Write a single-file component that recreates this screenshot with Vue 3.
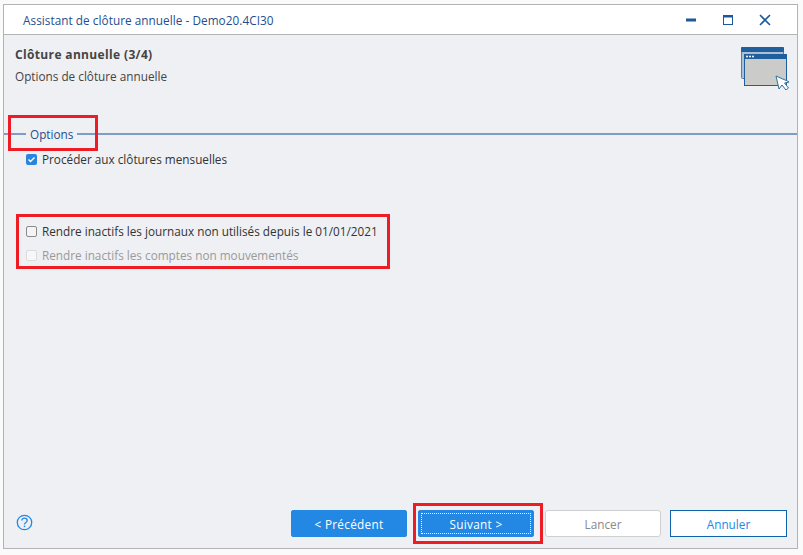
<script setup>
const title = 'Assistant de clôture annuelle - Demo20.4CI30'
</script>

<template>
  <div class="page">
    <div class="window">
      <header class="titlebar">
        <span class="title">{{ title }}</span>
        <div class="controls">
          <svg width="37" height="30" viewBox="0 0 37 30"><rect x="13" y="13.500" width="10" height="3" fill="#1c5a9c"/></svg>
          <svg width="37" height="30" viewBox="0 0 37 30"><rect x="13.500" y="10.500" width="9" height="9" fill="none" stroke="#1c5a9c"/><rect x="13" y="10" width="10" height="2.500" fill="#1c5a9c"/></svg>
          <svg width="37" height="30" viewBox="0 0 37 30"><path d="M13 10l10 10M23 10l-10 10" stroke="#1c5a9c" stroke-width="1.600" fill="none"/></svg>
        </div>
      </header>
      <main class="body">
        <section class="head">
          <div class="head-text">
            <h1>Clôture annuelle (3/4)</h1>
            <p>Options de clôture annuelle</p>
          </div>
          <svg class="wizard" width="49" height="44" viewBox="0 0 49 44">
            <rect x="1.500" y="1.500" width="42" height="31" rx="1" fill="#aebfd0" stroke="#4f80ad"/>
            <rect x="1" y="1" width="43" height="5" rx="1" fill="#1f5f9e"/>
            <rect x="4.500" y="8.500" width="42" height="31" fill="#cbcbc9" stroke="#1f5f9e"/>
            <rect x="4" y="8" width="43" height="5" rx="1" fill="#1f5f9e"/>
            <circle cx="7" cy="10.500" r="1" fill="#fff"/><circle cx="10" cy="10.500" r="1" fill="#fff"/><circle cx="13" cy="10.500" r="1" fill="#fff"/>
            <path d="M36 30l3 13 3-4 4 5 2.500-2-4-5 5-1z" fill="#fff" stroke="#2b739f" stroke-width="1"/>
          </svg>
        </section>
        <fieldset class="group">
          <legend>Options</legend>
          <label class="check first">
            <span class="box on"><svg width="11" height="11" viewBox="0 0 11 11"><path d="M2.500 5.500l2 2 4-4" fill="none" stroke="#fff" stroke-width="1.400"/></svg></span>
            Procéder aux clôtures mensuelles
          </label>
          <div class="annotated">
            <label class="check"><span class="box"></span>Rendre inactifs les journaux non utilisés depuis le 01/01/2021</label>
            <label class="check disabled"><span class="box"></span>Rendre inactifs les comptes non mouvementés</label>
          </div>
        </fieldset>
        <footer class="footer">
          <svg class="help" width="17" height="17" viewBox="0 0 17 17">
            <circle cx="8.500" cy="8.500" r="7.200" fill="none" stroke="#2388e4" stroke-width="1.300"/>
            <path d="M5.800 6.600c0-3.400 5.400-3.400 5.400 0 0 2-2.700 1.800-2.700 3.900" fill="none" stroke="#2388e4" stroke-width="1.300"/>
            <rect x="7.800" y="11.600" width="1.400" height="1.500" fill="#2388e4"/>
          </svg>
          <div class="buttons">
            <button class="btn primary">&lt; Précédent</button>
            <button class="btn primary focus"><span>Suivant &gt;</span></button>
            <button class="btn muted">Lancer</button>
            <button class="btn outline">Annuler</button>
          </div>
        </footer>
      </main>
    </div>
    <i class="mark mark-options"></i>
    <i class="mark mark-checks"></i>
    <i class="mark mark-next"></i>
  </div>
</template>

<style>
html, body { margin: 0; background: #fafafa; }
</style>

<style scoped>
.page {
  position: relative;
  width: 803px;
  height: 555px;
  padding: 4px 5px 6px 3px;
  box-sizing: border-box;
  font-family: "Open Sans", "Noto Sans", sans-serif;
  font-size: 11.750px;
  color: #333;
  overflow: hidden;
}
.window {
  height: 100%;
  box-sizing: border-box;
  border: 1px solid #b3b3b6;
  display: flex;
  flex-direction: column;
  background: #eff0f4;
}
.titlebar {
  height: 30px;
  flex: none;
  display: flex;
  align-items: center;
  justify-content: space-between;
  background: #fff;
  border-bottom: 1px solid #b3b3b6;
  box-sizing: border-box;
  padding-left: 19px;
}
.title { color: #1f4e8c; letter-spacing: 0.050px; }
.controls { display: flex; align-items: center; padding-right: 13px; }
.controls svg { display: block; }
.body { flex: 1; display: flex; flex-direction: column; min-height: 0; }
.head {
  display: flex;
  justify-content: space-between;
  padding: 11px 8px 0 11px;
  height: 90px;
  box-sizing: border-box;
  flex: none;
}
h1 { margin: 0 0 5px; font-size: 12px; letter-spacing: 0.350px; line-height: 17px; font-weight: 700; color: #444; }
.head p { margin: 0; line-height: 17px; color: #444; }
.wizard { display: block; }
.group {
  flex: 1;
  margin: 0;
  padding: 0 0 0 22px;
  border: 0;
  border-top: 2px solid #7f9cc5;
  min-width: 0;
  position: relative;
}
legend {
  margin-left: -8px;
  padding: 0 4px 0 12px;
  color: #1f4e8c;
  line-height: 17px;
  position: relative;
  top: 1px;
}
legend::before {
  content: "";
  position: absolute;
  left: 0;
  top: 7px;
  width: 8px;
  height: 2px;
  background: #7f9cc5;
}
.check { display: flex; align-items: center; gap: 5px; height: 24px; color: #333; }
.first { margin-top: 5px; }
.annotated { margin-top: 48px; }
.box {
  width: 9px;
  height: 9px;
  border: 1px solid #8a8a8a;
  border-radius: 2px;
  background: #f4f4f6;
  flex: none;
  display: flex;
}
.box.on { width: 11px; height: 11px; border: 0; border-radius: 2px; background: #2a85dd; }
.disabled { color: #9a9a9a; }
.disabled .box { border-color: #dcdcdc; background: #f7f7f8; }
.footer {
  flex: none;
  height: 55px;
  display: flex;
  align-items: flex-start;
  justify-content: space-between;
  padding: 0 10px 0 12px;
}
.help { margin-top: 21px; display: block; }
.buttons { display: flex; gap: 11px; padding-top: 17px; }
.btn {
  width: 116px;
  height: 27px;
  box-sizing: border-box;
  font: inherit;
  border: 1px solid #2388e4;
  border-radius: 2px;
  padding: 0;
  background: #2388e4;
  color: #fff;
  text-align: center;
}
.btn.primary { letter-spacing: 0.300px; }
.btn.focus { position: relative; }
.btn.focus::after {
  content: "";
  position: absolute;
  inset: 2px;
  border: 1px dotted #fff;
}
.btn.muted { background: #fff; border-color: #cfcfcf; color: #8a8a8a; border-radius: 3px; }
.btn.outline { width: 117px; background: #fff; border-color: #0f63ad; color: #2388e4; border-radius: 0; margin-left: -2px; }
.mark { position: absolute; border: 3px solid #ee1c25; box-sizing: border-box; pointer-events: none; }
.mark-options { left: 8px; top: 115px; width: 90px; height: 36px; }
.mark-checks { left: 16px; top: 214px; width: 374px; height: 55px; }
.mark-next { left: 413px; top: 503px; width: 130px; height: 41px; }
</style>
